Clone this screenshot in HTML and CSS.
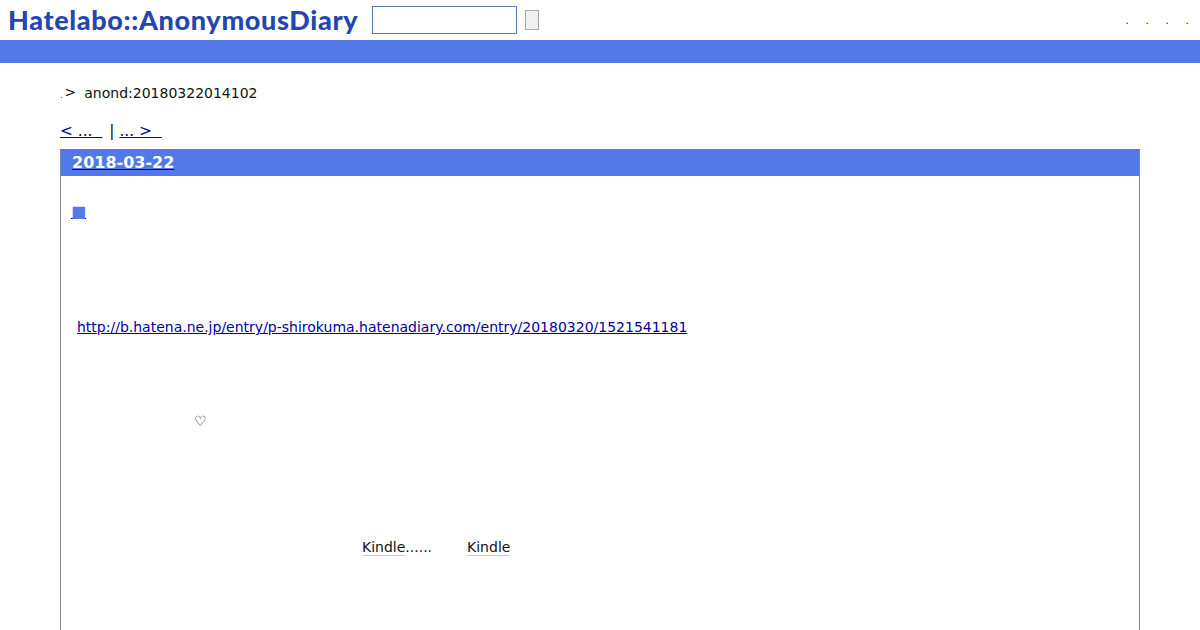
FILE: index.html
```html
<!DOCTYPE html>
<html lang="ja">
<head>
    <meta charset="UTF-8">
    <title>anond:20180322014102</title>
    <link rel="stylesheet" href="styles.css">
</head>
<body>
    <header class="top">
        <h1 class="logo"><a href="#">Hatelabo::AnonymousDiary</a></h1>
        <form class="search">
            <input class="search-box" type="text">
            <button class="search-btn" type="button"></button>
        </form>
        <ul class="top-links">
            <li>.</li>
            <li>.</li>
            <li>.</li>
            <li>.</li>
        </ul>
    </header>
    <div class="band"></div>

    <main class="page">
        <p class="crumb"><span class="crumb-home">.</span><span class="crumb-arrow">&gt;</span><span>anond:20180322014102</span></p>
        <p class="pager"><a href="#">&lt; ... &nbsp;</a><span class="pager-sep">|</span><a href="#">... &gt; &nbsp;</a></p>

        <section class="day">
            <h2 class="day-title"><a href="#"><span class="day-date">2018-03-22</span></a></h2>
            <div class="day-body">
                <h3 class="entry-mark"><a href="#"><span class="entry-square">■</span></a></h3>
                <p class="entry-url"><a href="#">http://b.hatena.ne.jp/entry/p-shirokuma.hatenadiary.com/entry/20180320/1521541181</a></p>
                <p class="entry-heart">♡</p>
                <p class="entry-kindle"><span class="kw">Kindle</span>......<span class="kw kw-second">Kindle</span></p>
            </div>
        </section>
    </main>
</body>
</html>
```

FILE: styles.css
```css
html, body {
    height: 630px;
    overflow: hidden;
}
body {
    margin: 0;
    font-family: "DejaVu Sans", sans-serif;
    font-size: 14px;
    color: #111;
    background-color: #fff;
}
a {
    color: #0000a0;
}

/* header */
.top {
    display: flex;
    align-items: center;
    height: 40px;
}
.logo {
    width: 350px;
    margin: 0 0 2px 8px;
    font-family: Lato, sans-serif;
    font-size: 27px;
    font-weight: 900;
    letter-spacing: 0.65px;
    white-space: nowrap;
}
.logo a {
    color: #2546b0;
    text-decoration: none;
}
.search {
    display: flex;
    align-items: center;
    margin-left: 14px;
}
.search-box {
    box-sizing: border-box;
    width: 145px;
    height: 28px;
    padding: 0;
    border: 1px solid #5a7ab0;
    background-color: #fff;
}
.search-btn {
    box-sizing: border-box;
    width: 14px;
    height: 20px;
    margin-left: 8px;
    padding: 0;
    border: 1px solid #aaa;
    border-radius: 0;
    background-color: #efefef;
}
.top-links {
    display: flex;
    margin: 0 3px 0 auto;
    padding: 0;
    list-style: none;
    font-size: 10px;
}
.top-links li {
    width: 20px;
    text-align: center;
}
.band {
    height: 23px;
    background-color: #5279e7;
}

/* main */
.page {
    padding: 0 60px;
}
.crumb {
    display: flex;
    align-items: baseline;
    margin: 21px 0 0;
    line-height: 18px;
}
.crumb-home {
    font-size: 8px;
}
.crumb-arrow {
    margin: 0 8px 0 2px;
    font-size: 14px;
    position: relative;
    top: -1px;
}
.pager {
    margin: 17px 0 0;
    font-size: 15.4px;
    line-height: 19px;
}
.pager-sep {
    margin: 0 5px 0 7px;
}
.day {
    margin-top: 8px;
    height: 600px;
    border: 1px solid #5279e7;
    border-left-color: #7a8aa8;
    border-right-color: #7a8aa8;
}
.day-title {
    margin: 0;
    padding: 0 0 0 11px;
    font-size: 16px;
    line-height: 26px;
    background-color: #5279e7;
}
.day-date {
    color: #fff;
}
.day-body {
    padding: 0 16px;
}
.entry-mark {
    margin: 26px 0 0 -6px;
    font-size: 16px;
    font-weight: 400;
    line-height: 20px;
}
.entry-square {
    color: #5279e7;
}
.entry-url {
    margin: 95px 0 0;
    line-height: 20px;
}
.entry-heart {
    margin: 74px 0 0 117px;
    line-height: 20px;
}
.entry-kindle {
    margin: 106px 0 0 285px;
    line-height: 20px;
}
.kw {
    border-bottom: 1px solid #ccc;
}
.kw-second {
    margin-left: 35px;
}
```
